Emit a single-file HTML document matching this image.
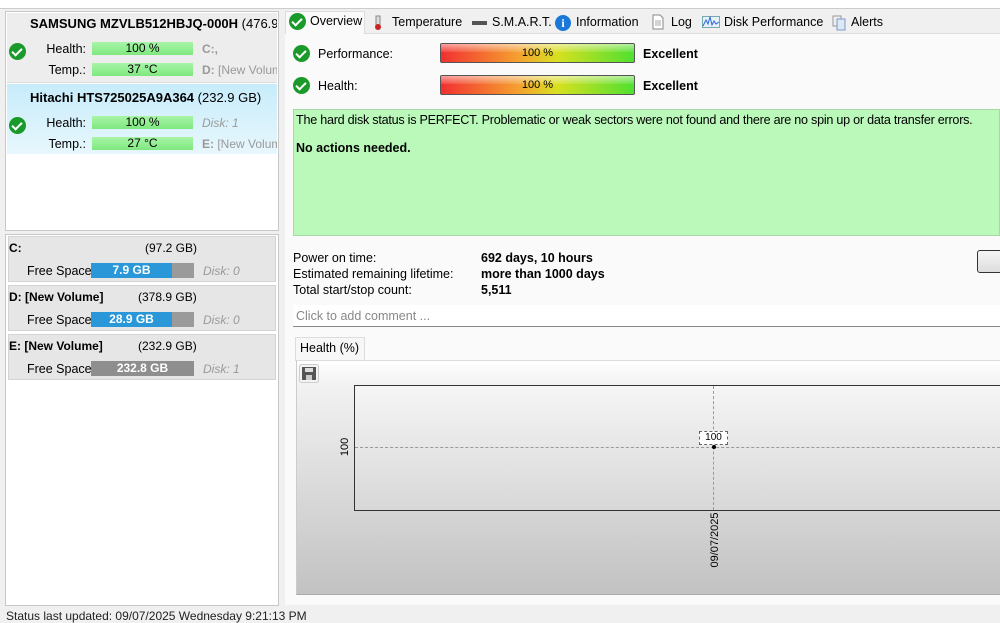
<!DOCTYPE html>
<html><head><meta charset="utf-8"><style>
*{box-sizing:border-box;margin:0;padding:0}
body{width:1000px;height:617px;overflow:hidden;background:#f0f0f0;font-family:"Liberation Sans",sans-serif;font-size:12px;color:#000;position:relative}
.a{position:absolute}
.chk{position:absolute;width:17px;height:17px;border-radius:50%;background:#1a9a2a}
.chk:after{content:"";position:absolute;left:5px;top:3px;width:4px;height:8px;border:solid #fff;border-width:0 2px 2px 0;transform:rotate(45deg)}
.gbar{position:absolute;height:13px;background:linear-gradient(#a8f5a8,#7fe87f);text-align:center;font-size:12px;line-height:13px}
.lbl{position:absolute;text-align:right;width:60px;font-size:12.5px}
.gray{color:#999;font-style:italic}
.vol{position:absolute;left:8px;width:268px;height:46px;background:#e6e6e6;border:1px solid #d4d4d4}
.rbar{position:absolute;left:440px;width:195px;height:20px;border:1px solid #555;border-radius:2px;background:linear-gradient(90deg,#f23030,#f5a030 40%,#d8e020 60%,#50e030);text-align:center;font-size:11px;line-height:18px;overflow:hidden}
.rbar:before{content:"";position:absolute;left:0;top:0;right:0;height:8px;background:linear-gradient(rgba(255,255,255,.55),rgba(255,255,255,.1))}
.rbar span{position:relative}
.tab{position:absolute;top:12px;height:21px;line-height:21px;font-size:12.5px}
</style></head><body>
<div class="a" style="left:0;top:0;width:1000px;height:9px;background:#fff;border-bottom:1px solid #ccc"></div>
<div class="a" style="left:0;top:9px;width:283px;height:598px;background:#f0f0f0"></div>
<!-- disk list -->
<div class="a" style="left:5px;top:11px;width:274px;height:220px;background:#fff;border:1px solid #c8c8c8"></div>
<div class="a" style="left:7px;top:13px;width:270px;height:70px;background:#ededed;border-bottom:1px solid #ddd"></div>
<div class="a" style="left:30px;top:16px;font-weight:bold;font-size:13px;white-space:nowrap;width:247px;overflow:hidden">SAMSUNG MZVLB512HBJQ-000H <span style="font-weight:normal">(476.9 GB)</span></div>
<div class="chk" style="left:9px;top:43px"></div>
<div class="lbl" style="left:26px;top:42px">Health:</div>
<div class="gbar" style="left:92px;top:42px;width:101px">100 %</div>
<div class="a" style="left:202px;top:42px;color:#999;font-weight:bold">C:,</div>
<div class="lbl" style="left:26px;top:63px">Temp.:</div>
<div class="gbar" style="left:92px;top:63px;width:101px">37 °C</div>
<div class="a" style="left:202px;top:63px;color:#999;white-space:nowrap;width:75px;overflow:hidden"><b>D:</b> [New Volume]</div>
<div class="a" style="left:7px;top:84px;width:270px;height:70px;background:linear-gradient(#c7ecfb,#e8f7fd)"></div>
<div class="a" style="left:30px;top:90px;font-weight:bold;font-size:13px;white-space:nowrap">Hitachi HTS725025A9A364 <span style="font-weight:normal">(232.9 GB)</span></div>
<div class="chk" style="left:9px;top:117px"></div>
<div class="lbl" style="left:26px;top:116px">Health:</div>
<div class="gbar" style="left:92px;top:116px;width:101px">100 %</div>
<div class="a gray" style="left:202px;top:116px">Disk: 1</div>
<div class="lbl" style="left:26px;top:137px">Temp.:</div>
<div class="gbar" style="left:92px;top:137px;width:101px">27 °C</div>
<div class="a" style="left:202px;top:137px;color:#999;white-space:nowrap;width:75px;overflow:hidden"><b>E:</b> [New Volume]</div>
<!-- volumes -->
<div class="a" style="left:5px;top:234px;width:274px;height:372px;background:#fff;border:1px solid #c8c8c8"></div>
<div class="vol" style="top:236px"></div>
<div class="vol" style="top:285px"></div>
<div class="vol" style="top:334px"></div>
<div class="a" style="left:9px;top:241px;font-weight:bold">C:</div>
<div class="a" style="left:145px;top:241px">(97.2 GB)</div>
<div class="a" style="left:9px;top:290px;font-weight:bold">D: [New Volume]</div>
<div class="a" style="left:138px;top:290px">(378.9 GB)</div>
<div class="a" style="left:9px;top:339px;font-weight:bold">E: [New Volume]</div>
<div class="a" style="left:138px;top:339px">(232.9 GB)</div>
<div class="a" style="left:27px;top:264px;font-size:12.5px">Free Space</div>
<div class="a" style="left:27px;top:313px;font-size:12.5px">Free Space</div>
<div class="a" style="left:27px;top:362px;font-size:12.5px">Free Space</div>
<div class="a" style="left:91px;top:263px;width:103px;height:15px;background:#9a9a9a"><div style="width:81px;height:15px;background:#2a98d8;color:#fff;font-weight:bold;text-align:center;line-height:15px">7.9 GB</div></div>
<div class="a" style="left:91px;top:312px;width:103px;height:15px;background:#9a9a9a"><div style="width:81px;height:15px;background:#2a98d8;color:#fff;font-weight:bold;text-align:center;line-height:15px">28.9 GB</div></div>
<div class="a" style="left:91px;top:361px;width:103px;height:15px;background:#8e8e8e;color:#fff;font-weight:bold;text-align:center;line-height:15px">232.8 GB</div>
<div class="a gray" style="left:203px;top:264px">Disk: 0</div>
<div class="a gray" style="left:203px;top:313px">Disk: 0</div>
<div class="a gray" style="left:203px;top:362px">Disk: 1</div>
<!-- status -->
<div class="a" style="left:6px;top:609px;font-size:12px;color:#222">Status last updated: 09/07/2025 Wednesday 9:21:13 PM</div>
<!-- right -->
<div class="a" style="left:285px;top:33px;width:715px;height:572px;background:#fafafa;border-top:1px solid #ddd"></div>
<div class="a" style="left:285px;top:11px;width:80px;height:23px;background:#fafafa;border:1px solid #ddd;border-bottom:none"></div>
<div class="chk" style="left:289px;top:13px"></div>
<div class="tab" style="left:310px;top:11px">Overview</div>
<svg class="a" style="left:372px;top:15px" width="12" height="16"><rect x="4" y="1" width="4" height="11" fill="#ddd" stroke="#888"/><circle cx="6" cy="12" r="3" fill="#c22"/></svg>
<div class="tab" style="left:392px">Temperature</div>
<div class="a" style="left:472px;top:21px;width:15px;height:4px;background:#555"></div>
<div class="tab" style="left:492px">S.M.A.R.T.</div>
<div class="a" style="left:555px;top:15px;width:16px;height:16px;border-radius:50%;background:#1a78d8;color:#fff;font-weight:bold;text-align:center;line-height:16px;font-size:12px;font-family:'Liberation Serif',serif">i</div>
<div class="tab" style="left:576px">Information</div>
<svg class="a" style="left:652px;top:14px" width="12" height="16"><path d="M1 1h7l3 3v11H1z" fill="#fff" stroke="#888"/><path d="M3 7h6M3 9h6M3 11h6" stroke="#aaa"/></svg>
<div class="tab" style="left:671px">Log</div>
<svg class="a" style="left:702px;top:16px" width="18" height="12"><rect x="0.5" y="0.5" width="17" height="11" fill="#e8f0fa" stroke="#7aa"/><path d="M1 10l3-6 2 4 2-7 2 8 2-4 2 3 3-2" fill="none" stroke="#2a6ad8"/></svg>
<div class="tab" style="left:724px">Disk Performance</div>
<svg class="a" style="left:832px;top:15px" width="14" height="16"><rect x="1" y="1" width="8" height="10" fill="#eee" stroke="#999"/><rect x="5" y="4" width="8" height="11" fill="#dde8f5" stroke="#7a9ac8"/></svg>
<div class="tab" style="left:851px">Alerts</div>

<div class="chk" style="left:293px;top:45px"></div>
<div class="a" style="left:318px;top:47px;font-size:12.5px">Performance:</div>
<div class="rbar" style="top:43px"><span>100 %</span></div>
<div class="a" style="left:643px;top:47px;font-weight:bold;font-size:12.5px">Excellent</div>
<div class="chk" style="left:293px;top:77px"></div>
<div class="a" style="left:318px;top:79px;font-size:12.5px">Health:</div>
<div class="rbar" style="top:75px"><span>100 %</span></div>
<div class="a" style="left:643px;top:79px;font-weight:bold;font-size:12.5px">Excellent</div>

<div class="a" style="left:293px;top:109px;width:707px;height:127px;background:#bbf9bb;border:1px solid #a8d8a8"></div>
<div class="a" style="left:296px;top:113px;font-size:12.6px;letter-spacing:-0.25px;white-space:nowrap">The hard disk status is PERFECT. Problematic or weak sectors were not found and there are no spin up or data transfer errors.</div>
<div class="a" style="left:296px;top:141px;font-weight:bold;font-size:12.5px">No actions needed.</div>

<div class="a" style="left:293px;top:250px;font-size:12.5px;line-height:16px">Power on time:<br>Estimated remaining lifetime:<br>Total start/stop count:</div>
<div class="a" style="left:481px;top:250px;font-size:12.5px;line-height:16px;font-weight:bold">692 days, 10 hours<br>more than 1000 days<br>5,511</div>
<div class="a" style="left:977px;top:250px;width:30px;height:23px;border:1px solid #333;border-radius:3px;background:linear-gradient(#f5f5f5,#ddd)"></div>

<div class="a" style="left:293px;top:305px;width:707px;height:22px;background:#fff;border-bottom:1px solid #888"></div>
<div class="a" style="left:296px;top:309px;color:#888;font-size:12.5px">Click to add comment ...</div>

<div class="a" style="left:295px;top:337px;width:70px;height:24px;background:#f7f7f7;border:1px solid #ddd;border-bottom:none"></div>
<div class="a" style="left:300px;top:341px;font-size:12.5px">Health (%)</div>
<div class="a" style="left:296px;top:360px;width:704px;height:235px;background:linear-gradient(#fff,#f2f2f2 10%,#c2c2c2);border-top:1px solid #ddd;border-left:1px solid #ccc;border-bottom:1px solid #aaa"></div>
<svg class="a" style="left:299px;top:364px" width="20" height="19"><rect x="0.5" y="0.5" width="19" height="18" rx="2" fill="#f4f4f4" stroke="#ccc"/><rect x="3" y="3" width="14" height="13" fill="#555"/><rect x="6" y="4" width="8" height="4" fill="#ddd"/><rect x="7" y="11" width="6" height="5" fill="#ccc"/></svg>
<div class="a" style="left:354px;top:385px;width:650px;height:126px;border:1px solid #333;border-right:none;background:linear-gradient(#f5f5f5,#d8d8d8)"></div>
<div class="a" style="left:355px;top:447px;width:645px;border-top:1px dashed #999"></div>
<div class="a" style="left:713px;top:386px;height:124px;border-left:1px dashed #999"></div>
<div class="a" style="left:712px;top:445px;width:4px;height:4px;background:#000;border-radius:50%"></div>
<div class="a" style="left:699px;top:431px;width:29px;height:14px;border:1px dashed #666;background:#fff;font-size:10px;text-align:center;line-height:12px">100</div>
<svg class="a" style="left:330px;top:380px" width="420" height="200">
<text transform="translate(18,67) rotate(-90)" text-anchor="middle" font-family="Liberation Sans" font-size="11">100</text>
<text transform="translate(388,160) rotate(-90)" text-anchor="middle" font-family="Liberation Sans" font-size="11">09/07/2025</text>
</svg>
</body></html>
